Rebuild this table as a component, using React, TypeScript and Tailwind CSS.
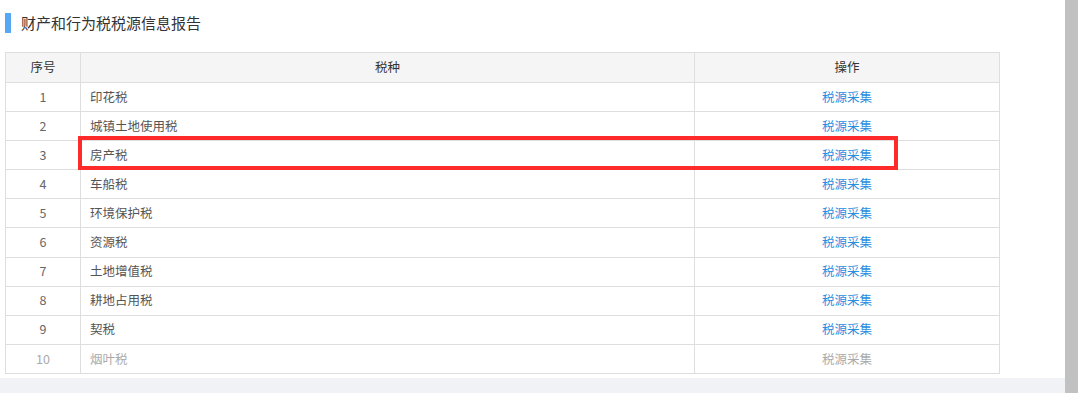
import React from 'react';

const rows = [
  '印花税',
  '城镇土地使用税',
  '房产税',
  '车船税',
  '环境保护税',
  '资源税',
  '土地增值税',
  '耕地占用税',
  '契税',
  '烟叶税',
];

export default function App() {
  return (
    <div
      className="flex h-[393px] w-[1080px] bg-white overflow-hidden"
      style={{ fontFamily: '"Microsoft YaHei", "Noto Sans CJK SC", sans-serif' }}
    >
      <div className="flex w-[1065px] flex-col">
        <div className="flex h-[378px] flex-col bg-white pl-[5px]">
          {/* 标题 */}
          <div className="flex h-[46px] items-center">
            <div className="h-[20px] w-[6px] bg-[#56a8f2]" />
            <span className="ml-[10px] text-[15px] text-[#333]">财产和行为税税源信息报告</span>
          </div>

          <div className="relative mt-[6px] w-[995px]">
            <table className="w-full border-collapse text-[12.5px]">
              <thead>
                <tr className="h-[30px] bg-[#f5f5f5]">
                  <th className="w-[75px] border border-[#dedede] font-normal text-[#333]">序号</th>
                  <th className="w-[614px] border border-[#dedede] font-normal text-[#333]">税种</th>
                  <th className="border border-[#dedede] font-normal text-[#333]">操作</th>
                </tr>
              </thead>
              <tbody>
                {rows.map((name, i) => {
                  const off = i === rows.length - 1;
                  return (
                    <tr key={i} className="h-[29.1px]">
                      <td className={`border border-[#dedede] text-center ${off ? 'text-[#aaa]' : 'text-[#666]'}`}>{i + 1}</td>
                      <td className={`border border-[#dedede] pl-[9px] ${off ? 'text-[#aaa]' : 'text-[#555]'}`}>{name}</td>
                      <td className={`border border-[#dedede] text-center ${off ? 'text-[#aaa]' : 'text-[#2a8de0]'}`}>税源采集</td>
                    </tr>
                  );
                })}
              </tbody>
            </table>
            {/* 红框标注 */}
            <div className="pointer-events-none absolute left-[73px] top-[84px] h-[34px] w-[820px] border-[4px] border-[#ff2b2b]" />
          </div>
        </div>
        <div className="flex-1 bg-[#f0f2f5]" />
      </div>
      <div className="h-full w-[13px] bg-[#c1c1c1]" />
      <div className="h-full flex-1 bg-white" />
    </div>
  );
}
